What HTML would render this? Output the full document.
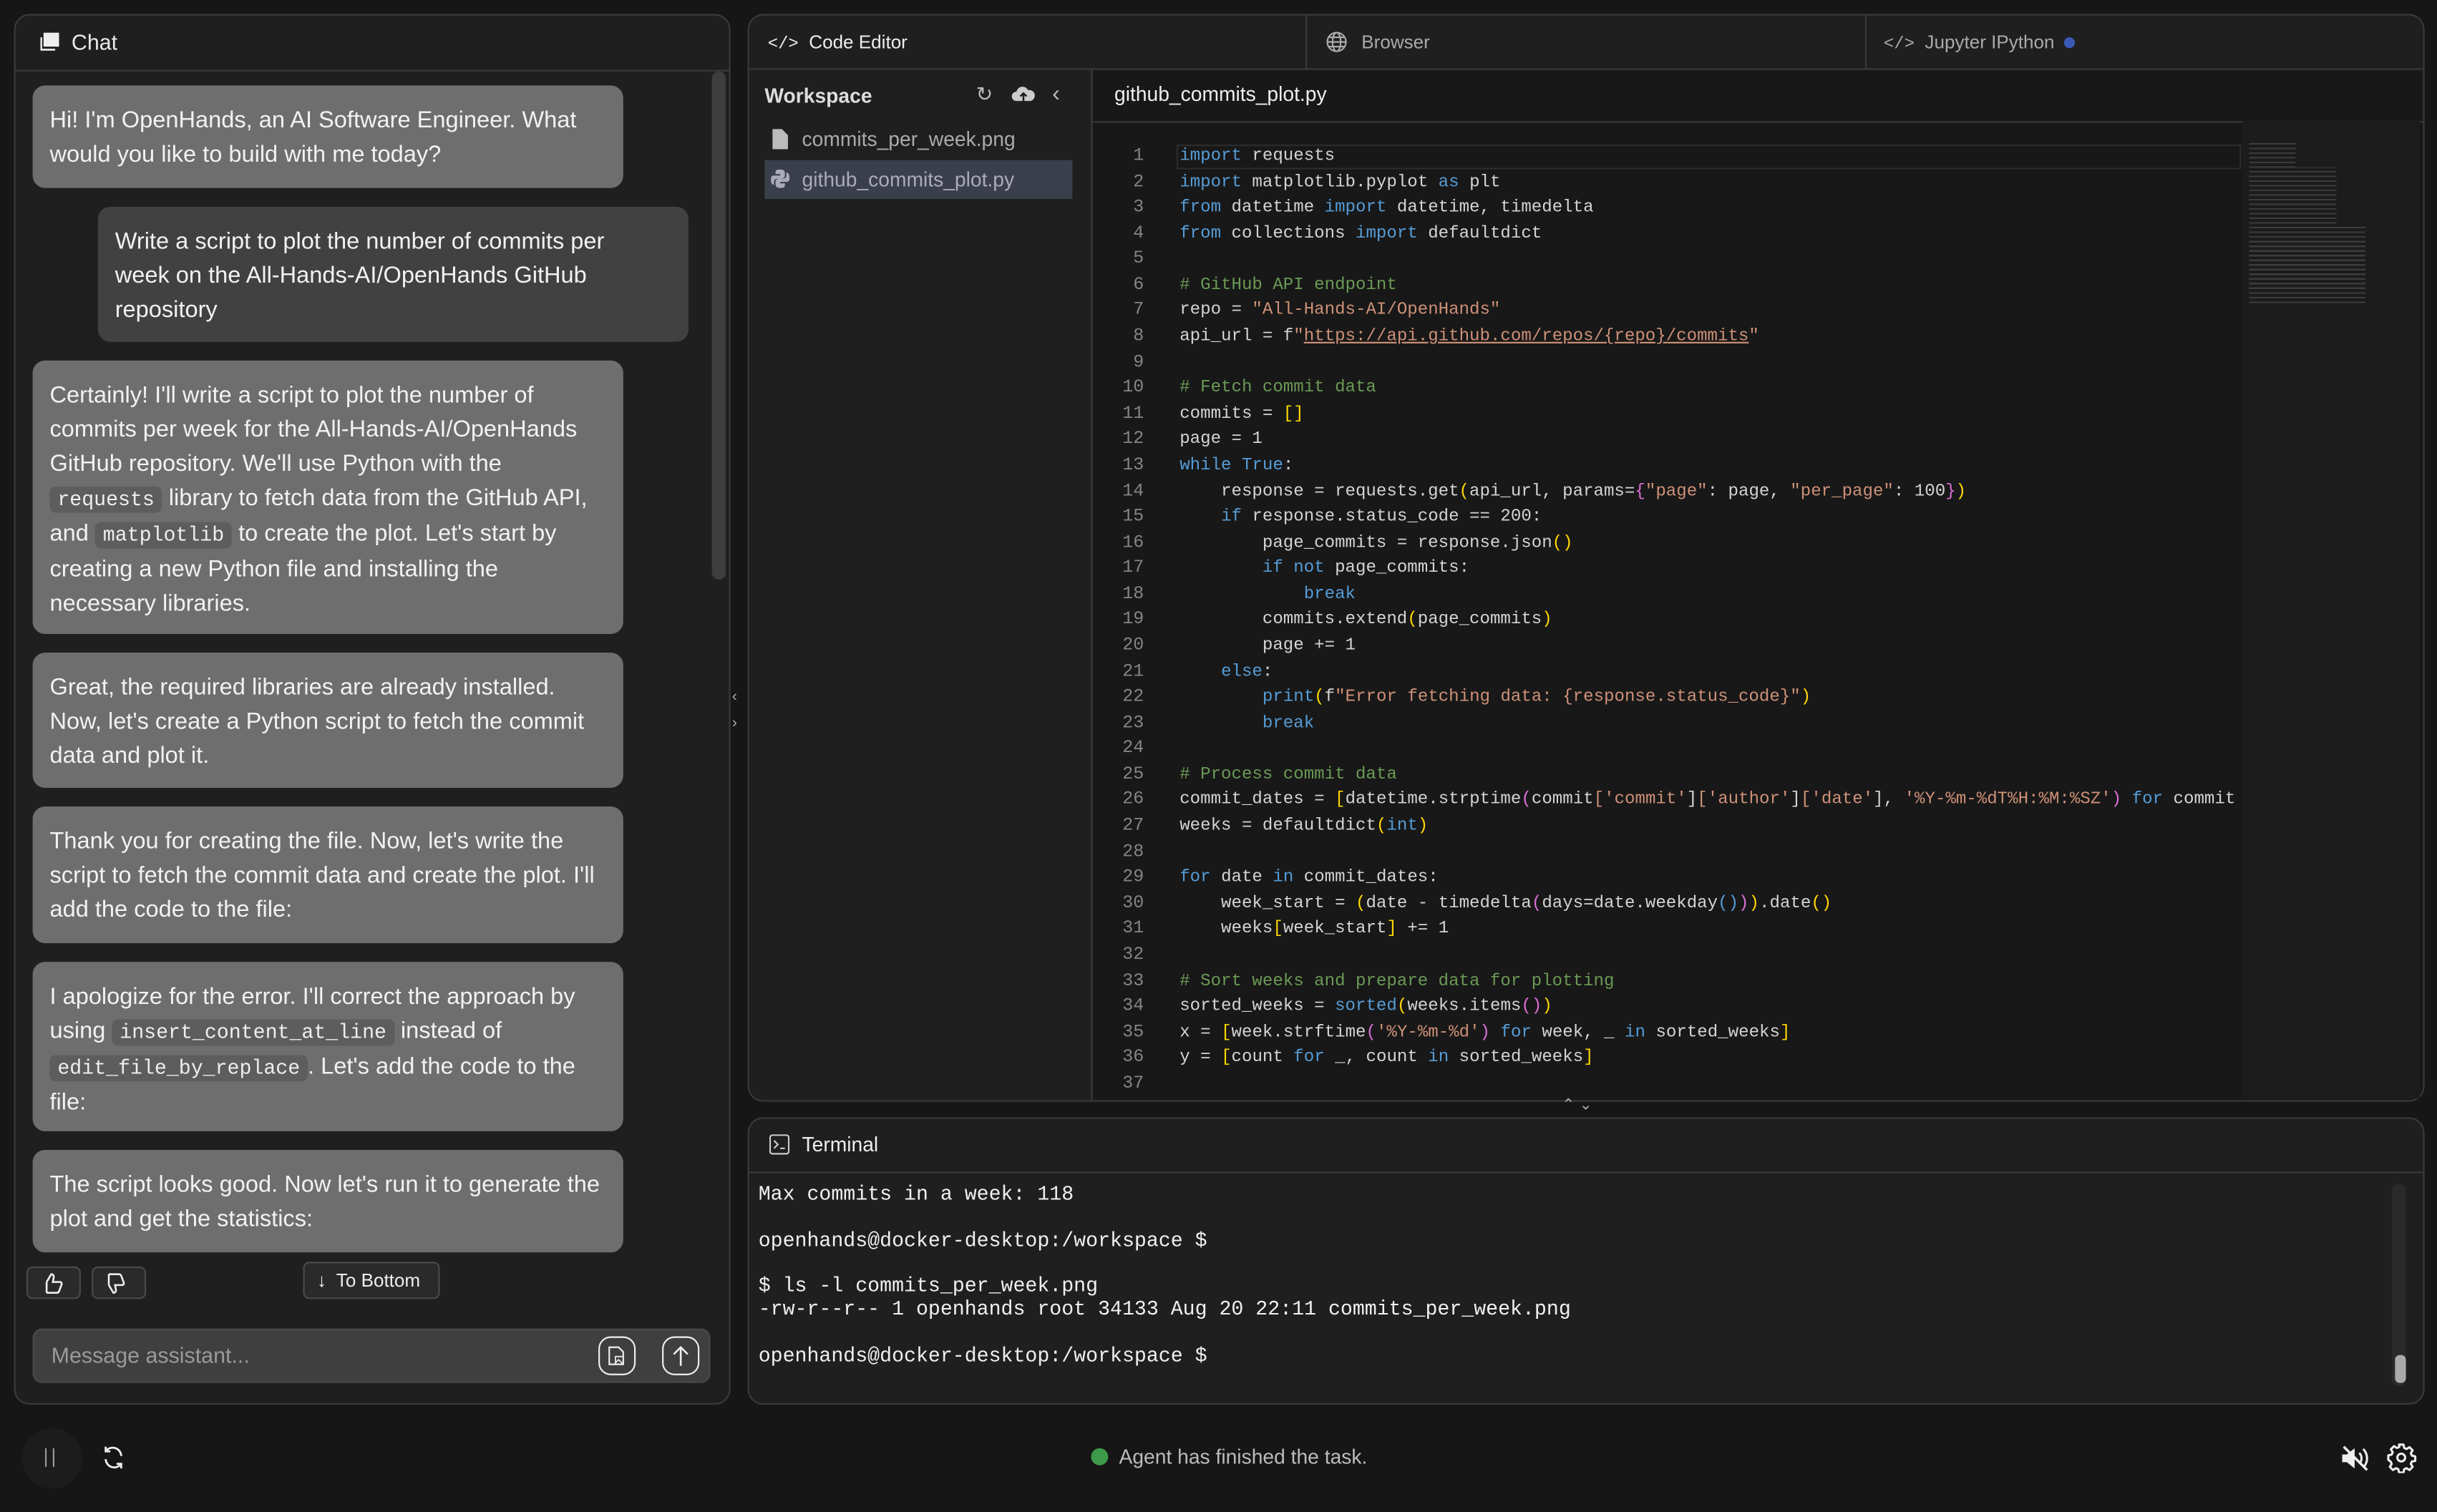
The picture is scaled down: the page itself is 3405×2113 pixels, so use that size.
<!DOCTYPE html>
<html><head><meta charset="utf-8"><style>
html,body{margin:0;padding:0;background:#161616;overflow:hidden}
body{width:3405px;height:2113px}
#w{position:absolute;left:0;top:0;width:1568px;height:973px;transform:scale(2.171556);transform-origin:0 0;font-family:"Liberation Sans",sans-serif;color:#e8e8e8}
.a{position:absolute}
.panel{position:absolute;background:#1f1f1f;border:1px solid #3a3a3a;border-radius:10px;overflow:hidden;box-sizing:border-box}
.bub{position:absolute;border-radius:8px;font-size:15px;line-height:22px;padding:12px 11px 11px;box-sizing:border-box;color:#f2f2f2}
.as{background:#6e6e6e;left:21px;width:380px}
.us{background:#414141;left:63px;width:380px}
code{font-family:"Liberation Mono",monospace;font-size:13px;background:#5d5d5d;border-radius:4px;padding:1px 5px;color:#eee}
.code{position:absolute;left:759px;top:93px;font-family:"Liberation Mono",monospace;font-size:11.1px;line-height:16.58px;color:#d4d4d4;white-space:pre;width:684px;overflow:hidden}
.ln{position:absolute;left:704px;width:32px;top:93px;text-align:right;font-family:"Liberation Mono",monospace;font-size:11.5px;line-height:16.58px;color:#858585;white-space:pre}
.k{color:#569cd6}.s{color:#ce9178}.c{color:#6a9955}.y{color:#ffd700}.p{color:#da70d6}.f{color:#dcdcaa}
.term{position:absolute;left:488px;top:762px;font-family:"Liberation Mono",monospace;font-size:13px;line-height:14.8px;color:#f0f0f0;white-space:pre}
.btn{position:absolute;border:1px solid #4a4a4a;background:#2a2a2a;border-radius:4px;box-sizing:border-box}
</style></head><body><div id="w">

<!-- CHAT -->
<div class="panel" style="left:9px;top:9px;width:461px;height:895px">
  <div class="a" style="left:0;top:0;width:461px;height:35px;border-bottom:1px solid #3a3a3a"></div>
  <svg class="a" style="left:16px;top:11px" width="12" height="12" viewBox="0 0 12 12"><rect x="2" y="0" width="10" height="9" fill="#eee"/><path d="M0.5 3v8h9" stroke="#eee" fill="none" stroke-width="1.2"/></svg>
  <div class="a" style="left:36px;top:9px;font-size:14px">Chat</div>
  <div class="a" style="left:448px;top:36px;width:9px;height:327px;background:#3e3e3e;border-radius:5px"></div>
</div>
<div class="bub as" style="top:55px;height:66px">Hi! I'm OpenHands, an AI Software Engineer. What would you like to build with me today?</div>
<div class="bub us" style="top:133px;height:87px;padding-right:50px">Write a script to plot the number of commits per week on the All-Hands-AI/OpenHands GitHub repository</div>
<div class="bub as" style="top:232px;height:176px">Certainly! I'll write a script to plot the number of commits per week for the All-Hands-AI/OpenHands GitHub repository. We'll use Python with the <code>requests</code> library to fetch data from the GitHub API, and <code>matplotlib</code> to create the plot. Let's start by creating a new Python file and installing the necessary libraries.</div>
<div class="bub as" style="top:420px;height:87px">Great, the required libraries are already installed. Now, let's create a Python script to fetch the commit data and plot it.</div>
<div class="bub as" style="top:519px;height:88px">Thank you for creating the file. Now, let's write the script to fetch the commit data and create the plot. I'll add the code to the file:</div>
<div class="bub as" style="top:619px;height:109px">I apologize for the error. I'll correct the approach by using <code>insert_content_at_line</code> instead of <code>edit_file_by_replace</code>. Let's add the code to the file:</div>
<div class="bub as" style="top:740px;height:66px">The script looks good. Now let's run it to generate the plot and get the statistics:</div>
<div class="btn" style="left:17px;top:815px;width:35px;height:21px"><svg class="a" style="left:9px;top:3px" width="14" height="14" viewBox="0 0 14 14"><path d="M3 6v7M3 6l3-5c1 0 2 1 1.5 2.5L7 6h4.5c1 0 1.5 1 1 2l-1.5 4c-.3.7-1 1-1.6 1H3" stroke="#eee" fill="none" stroke-width="1.2"/></svg></div>
<div class="btn" style="left:59px;top:815px;width:35px;height:21px"><svg class="a" style="left:7px;top:3px" width="14" height="14" viewBox="0 0 14 14"><path d="M3 8V1M3 8l3 5c1 0 2-1 1.5-2.5L7 8h4.5c1 0 1.5-1 1-2L11 2c-.3-.7-1-1-1.6-1H3" stroke="#eee" fill="none" stroke-width="1.2"/></svg></div>
<div class="btn" style="left:195px;top:812px;width:88px;height:24px;font-size:12px;line-height:22px;color:#eee"><span style="margin-left:8px">↓</span> <span style="margin-left:3px">To Bottom</span></div>
<div class="a" style="left:21px;top:855px;width:436px;height:35px;background:#3f3f3f;border:1px solid #4a4a4a;border-radius:6px;box-sizing:border-box"></div>
<div class="a" style="left:33px;top:864px;font-size:14px;color:#9a9a9a">Message assistant...</div>
<div class="a" style="left:385px;top:860px;width:24px;height:25px;border:1.3px solid #eee;border-radius:8px;box-sizing:border-box"><svg class="a" style="left:5px;top:5px" width="12" height="13" viewBox="0 0 12 13"><path d="M1 1h6l3 3v8H1z" stroke="#eee" fill="none"/><path d="M5 7h5v5H5zM5 11l2-2 3 3" stroke="#eee" fill="none" stroke-width=".8"/></svg></div>
<div class="a" style="left:426px;top:860px;width:24px;height:25px;border:1.3px solid #eee;border-radius:8px;box-sizing:border-box"><svg class="a" style="left:5px;top:4px" width="12" height="15" viewBox="0 0 12 15"><path d="M6 14V2M1.5 6.5L6 2l4.5 4.5" stroke="#eee" fill="none" stroke-width="1.2"/></svg></div>

<div class="a" style="left:471px;top:440px;font-size:10px;color:#aaa;line-height:17px">‹<br>›</div>

<!-- EDITOR -->
<div class="panel" style="left:481px;top:9px;width:1079px;height:700px;background:#181818">
  <div class="a" style="left:0;top:0;width:1079px;height:34px;background:#1f1f1f;border-bottom:1px solid #3a3a3a"></div>
  <div class="a" style="left:358px;top:0;width:1px;height:34px;background:#3a3a3a"></div>
  <div class="a" style="left:718px;top:0;width:1px;height:34px;background:#3a3a3a"></div>
  <div class="a" style="left:12px;top:10px;font-size:12px;color:#eee"><span style="font-family:'Liberation Mono';font-size:11px">&lt;/&gt;</span>&nbsp; Code Editor</div>
  <svg class="a" style="left:371px;top:10px" width="14" height="14" viewBox="0 0 14 14"><circle cx="7" cy="7" r="6" stroke="#aaa" fill="none"/><ellipse cx="7" cy="7" rx="2.6" ry="6" stroke="#aaa" fill="none"/><path d="M1 7h12M2 4h10M2 10h10" stroke="#aaa"/></svg>
  <div class="a" style="left:394px;top:10px;font-size:12px;color:#aaa">Browser</div>
  <div class="a" style="left:730px;top:10px;font-size:12px;color:#aaa"><span style="font-family:'Liberation Mono';font-size:11px">&lt;/&gt;</span>&nbsp; Jupyter IPython <span style="display:inline-block;width:7px;height:7px;border-radius:50%;background:#3b5ab8;margin-left:3px"></span></div>
  <div class="a" style="left:0;top:35px;width:220px;height:665px;background:#1f1f1f;border-right:1px solid #3a3a3a"></div>
  <div class="a" style="left:221px;top:68px;width:858px;height:1px;background:#3a3a3a"></div>
</div>
<div class="a" style="left:492px;top:54px;font-size:13px;font-weight:bold;color:#ddd">Workspace</div>
<div class="a" style="left:628px;top:53px;font-size:13px;color:#bbb">↻</div>
<svg class="a" style="left:651px;top:55px" width="15" height="11" viewBox="0 0 15 11"><path d="M4 10H3a3 3 0 010-6 4 4 0 017.5-1A3 3 0 0112 10h-1" fill="#ccc"/><path d="M7.5 11V5M5.5 7l2-2 2 2" stroke="#1f1f1f" fill="none" stroke-width="1.2"/></svg>
<div class="a" style="left:677px;top:52px;font-size:15px;color:#bbb">‹</div>
<svg class="a" style="left:497px;top:83px" width="10" height="13" viewBox="0 0 10 13"><path d="M0 0h6l4 4v9H0z" fill="#bbb"/></svg>
<div class="a" style="left:516px;top:82px;font-size:13px;color:#aaa">commits_per_week.png</div>
<div class="a" style="left:492px;top:103px;width:198px;height:25px;background:#3a3f4b"></div>
<svg class="a" style="left:496px;top:109px" width="12" height="12" viewBox="0 0 12 12"><path d="M6 0C3 0 3 1 3 2v1h3v1H1.5C0 4 0 6 0 7s.5 3 2 3V8c0-1 1-2 2-2h3c1 0 2-1 2-2V2c0-1-1-2-3-2z" fill="#aab"/><path d="M6 12c3 0 3-1 3-2V9H6V8h4.5C12 8 12 6 12 5s-.5-3-2-3v2c0 1-1 2-2 2H5c-1 0-2 1-2 2v2c0 1 1 2 3 2z" fill="#aab"/></svg>
<div class="a" style="left:516px;top:108px;font-size:13px;color:#aab">github_commits_plot.py</div>
<div class="a" style="left:717px;top:53px;font-size:13px;color:#eee">github_commits_plot.py</div>
<div class="a" style="left:757px;top:93px;width:685px;height:16px;border:1px solid #2c2c2c;box-sizing:border-box"></div>

<div class="ln">1
2
3
4
5
6
7
8
9
10
11
12
13
14
15
16
17
18
19
20
21
22
23
24
25
26
27
28
29
30
31
32
33
34
35
36
37</div>
<div class="code"><span class="k">import</span> requests
<span class="k">import</span> matplotlib.pyplot <span class="k">as</span> plt
<span class="k">from</span> datetime <span class="k">import</span> datetime, timedelta
<span class="k">from</span> collections <span class="k">import</span> defaultdict

<span class="c"># GitHub API endpoint</span>
repo = <span class="s">"All-Hands-AI/OpenHands"</span>
api_url = f<span class="s">"<u>https://api.github.com/repos/{repo}/commits</u>"</span>

<span class="c"># Fetch commit data</span>
commits = <span class="y">[]</span>
page = 1
<span class="k">while</span> <span class="k">True</span>:
    response = requests.get<span class="y">(</span>api_url, params=<span class="p">{</span><span class="s">"page"</span>: page, <span class="s">"per_page"</span>: 100<span class="p">}</span><span class="y">)</span>
    <span class="k">if</span> response.status_code == 200:
        page_commits = response.json<span class="y">()</span>
        <span class="k">if not</span> page_commits:
            <span class="k">break</span>
        commits.extend<span class="y">(</span>page_commits<span class="y">)</span>
        page += 1
    <span class="k">else</span>:
        <span class="k">print</span><span class="y">(</span>f<span class="s">"Error fetching data: {response.status_code}"</span><span class="y">)</span>
        <span class="k">break</span>

<span class="c"># Process commit data</span>
commit_dates = <span class="y">[</span>datetime.strptime<span class="p">(</span>commit<span class="s">[</span><span class="s">'commit'</span>]<span class="s">[</span><span class="s">'author'</span>]<span class="s">[</span><span class="s">'date'</span>], <span class="s">'%Y-%m-%dT%H:%M:%SZ'</span><span class="p">)</span> <span class="k">for</span> commit
weeks = defaultdict<span class="y">(</span><span class="k">int</span><span class="y">)</span>

<span class="k">for</span> date <span class="k">in</span> commit_dates:
    week_start = <span class="y">(</span>date - timedelta<span class="p">(</span>days=date.weekday<span class="k">()</span><span class="p">)</span><span class="y">)</span>.date<span class="y">()</span>
    weeks<span class="y">[</span>week_start<span class="y">]</span> += 1

<span class="c"># Sort weeks and prepare data for plotting</span>
sorted_weeks = <span class="k">sorted</span><span class="y">(</span>weeks.items<span class="p">()</span><span class="y">)</span>
x = <span class="y">[</span>week.strftime<span class="p">(</span><span class="s">'%Y-%m-%d'</span><span class="p">)</span> <span class="k">for</span> week, _ <span class="k">in</span> sorted_weeks<span class="y">]</span>
y = <span class="y">[</span>count <span class="k">for</span> _, count <span class="k">in</span> sorted_weeks<span class="y">]</span>
</div>
<div class="a" style="left:1443px;top:78px;width:114px;height:629px;background:#1c1c1c"></div>
<div class="a" style="left:1447px;top:92px;width:75px;height:104px;opacity:.3;background:repeating-linear-gradient(#888 0 1px,transparent 1px 3px);clip-path:polygon(0 0,40% 0,40% 15%,75% 15%,75% 50%,100% 50%,100% 100%,0 100%)"></div>
<div class="a" style="left:1005px;top:706px;font-size:10px;color:#aaa">⌃ ⌄</div>

<!-- TERMINAL -->
<div class="panel" style="left:481px;top:719px;width:1079px;height:185px;background:#1f1f1f">
  <div class="a" style="left:0;top:0;width:1079px;height:34px;border-bottom:1px solid #3a3a3a"></div>
  <div class="a" style="left:1057px;top:42px;width:9px;height:130px;background:#2a2a2a;border-radius:4px"></div>
  <div class="a" style="left:1059px;top:152px;width:7px;height:18px;background:#aaa;border-radius:3px"></div>
</div>
<svg class="a" style="left:495px;top:730px" width="13" height="13" viewBox="0 0 13 13"><rect x=".5" y=".5" width="12" height="12" rx="1.5" stroke="#ccc" fill="none"/><path d="M3 4l2.5 2.5L3 9M7 9h3" stroke="#ccc" fill="none"/></svg>
<div class="a" style="left:516px;top:729px;font-size:13px;color:#eee">Terminal</div>
<div class="term">Max commits in a week: 118

openhands@docker-desktop:/workspace $

$ ls -l commits_per_week.png
-rw-r--r-- 1 openhands root 34133 Aug 20 22:11 commits_per_week.png

openhands@docker-desktop:/workspace $</div>

<!-- BOTTOM BAR -->
<div class="a" style="left:14px;top:919px;width:39px;height:39px;border-radius:50%;background:#1c1c1c"></div>
<div class="a" style="left:29px;top:932px;width:1px;height:12px;background:#999"></div>
<div class="a" style="left:34px;top:932px;width:1px;height:12px;background:#999"></div>
<svg class="a" style="left:64px;top:929px" width="18" height="18" viewBox="0 0 18 18"><path d="M14 8A5.5 5.5 0 004 5M4 10a5.5 5.5 0 0010 3M4 2v3h3M14 16v-3h-3" stroke="#eee" fill="none" stroke-width="1.3"/></svg>
<div class="a" style="left:702px;top:932px;width:11px;height:11px;border-radius:50%;background:#3d9a4a"></div>
<div class="a" style="left:720px;top:930px;font-size:13px;color:#bbb">Agent has finished the task.</div>
<svg class="a" style="left:1506px;top:929px" width="19" height="19" viewBox="0 0 19 19"><path d="M1 7h3l5-4v13l-5-4H1z" fill="#eee"/><path d="M12 6a5 5 0 010 7M14.5 3.5a8.5 8.5 0 010 12" stroke="#eee" fill="none" stroke-width="1.4"/><path d="M2 2l15 15" stroke="#eee" stroke-width="1.6"/></svg>
<svg class="a" style="left:1535px;top:928px" width="20" height="20" viewBox="0 0 24 24"><path d="M10.3 2h3.4l.6 2.6 1.8.8 2.3-1.4 2.4 2.4-1.4 2.3.8 1.8 2.6.6v3.4l-2.6.6-.8 1.8 1.4 2.3-2.4 2.4-2.3-1.4-1.8.8-.6 2.6h-3.4l-.6-2.6-1.8-.8-2.3 1.4-2.4-2.4 1.4-2.3-.8-1.8L2 13.7v-3.4l2.6-.6.8-1.8L4 5.6 6.4 3.2l2.3 1.4 1.8-.8z" stroke="#eee" fill="none" stroke-width="1.7" stroke-linejoin="round"/><circle cx="12" cy="12" r="3" stroke="#eee" fill="none" stroke-width="1.7"/></svg>

</div></body></html>
